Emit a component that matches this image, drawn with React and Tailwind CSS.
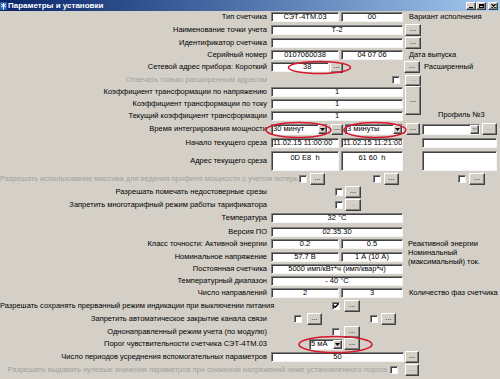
import React from 'react';

const sunken =
  'bg-white border border-t-[#808080] border-l-[#808080] border-b-[#f4f4f4] border-r-[#f4f4f4] shadow-[inset_1px_1px_0_#404040]';
const raised =
  'bg-[#d4d0c8] border border-t-white border-l-white border-b-[#404040] border-r-[#404040] shadow-[inset_-1px_-1px_0_#808080]';
const grey = 'text-[#a3a09a]';

function Row({ h, children }) {
  return <div className={`flex items-center shrink-0 ${h}`}>{children}</div>;
}

function Label({ children, w = 'w-[270px]', off }) {
  return (
    <div className={`${w} shrink-0 pr-[3px] text-right whitespace-nowrap ${off ? grey : 'text-black'}`}>
      {children}
    </div>
  );
}

function Field({ className = '', box = 'h-[10px] items-center justify-center', children }) {
  return (
    <div className={`${sunken} flex shrink-0 overflow-hidden whitespace-nowrap ${box} ${className}`}>
      {children}
    </div>
  );
}

function Btn({ className = '', off }) {
  return (
    <div className={`${raised} flex shrink-0 items-center justify-center ${off ? grey : 'text-black'} ${className}`}>
      <span className="leading-none -mt-[2px]">...</span>
    </div>
  );
}

function Check({ className = '', checked }) {
  return (
    <div className={`${sunken} w-[8px] h-[8px] shrink-0 flex items-center justify-center ${className}`}>
      {checked && (
        <svg width="6" height="6" viewBox="0 0 6 6">
          <path d="M0.5 2.5 L2.2 4.3 L5.5 0.8" stroke="#000" strokeWidth="1.3" fill="none" />
        </svg>
      )}
    </div>
  );
}

function Combo({ className = '', off, children }) {
  return (
    <div className={`${sunken} flex shrink-0 items-center h-[11px] ${className}`}>
      <span className="flex-1 pl-[1px] whitespace-nowrap overflow-hidden">{children}</span>
      <div className={`${raised} w-[9px] h-full flex items-center justify-center`}>
        <svg width="5" height="3" viewBox="0 0 5 3">
          <path d="M0 0h5L2.5 3z" fill={off ? '#a3a09a' : '#000'} />
        </svg>
      </div>
    </div>
  );
}

function TitleBar() {
  return (
    <div className="h-[11px] shrink-0 flex items-center bg-gradient-to-r from-[#0a246a] to-[#a6caf0]">
      <svg width="7" height="8" viewBox="0 0 7 8" className="ml-[0px] mr-[1px]">
        <rect width="7" height="8" fill="#2a5fb8" />
        <path d="M3.5 1 L3.5 7.5 M1 2 L6 5 M6 2 L1 5" stroke="#fff" strokeWidth="1" />
      </svg>
      <span className="text-white font-bold text-[8px] leading-none whitespace-nowrap">Параметры и установки</span>
      <div className="ml-auto mr-[2px] flex items-center">
        <div className={`${raised} w-[10px] h-[8px] flex items-end justify-center pb-[1px]`}>
          <div className="w-[4px] h-[1px] bg-black" />
        </div>
        <div className={`${raised} w-[10px] h-[8px] flex items-center justify-center`}>
          <div className="w-[5px] h-[4px] border border-black border-t-2" />
        </div>
        <div className={`${raised} w-[10px] h-[8px] ml-[2px] flex items-center justify-center`}>
          <svg width="5" height="4" viewBox="0 0 5 4">
            <path d="M0.5 0 L4.5 4 M4.5 0 L0.5 4" stroke="#000" strokeWidth="1.2" />
          </svg>
        </div>
      </div>
    </div>
  );
}

export default function App() {
  return (
    <div className="relative w-[500px] h-[379px] overflow-hidden bg-[#d4d0c8] font-['Liberation_Sans',Arial,sans-serif] text-[7.5px] leading-none text-black">
      <div className="flex flex-col">
        <TitleBar />

        <Row h="h-[12px]">
          <Label>Тип счетчика</Label>
          <Field className="ml-[1px] w-[68px]">СЭТ-4ТМ.03</Field>
          <Field className="ml-[2px] w-[62px]">00</Field>
          <span className="ml-[6px] whitespace-nowrap">Вариант исполнения</span>
        </Row>

        <Row h="h-[13px]">
          <Label>Наименование точки учета</Label>
          <Field className="ml-[1px] w-[132px]">Т-2</Field>
          <Btn className="ml-[2px] w-[16px] h-[12px]" />
        </Row>

        <Row h="h-[13px]">
          <Label>Идентификатор счетчика</Label>
          <Field className="ml-[1px] w-[132px]" />
          <Btn className="ml-[2px] w-[16px] h-[12px]" />
        </Row>

        <Row h="h-[11px]">
          <Label>Серийный номер</Label>
          <Field className="ml-[1px] w-[68px]">0107060038</Field>
          <Field className="ml-[2px] w-[62px]">04 07 06</Field>
          <span className="ml-[6px] whitespace-nowrap">Дата выпуска</span>
        </Row>

        <Row h="h-[14px]">
          <Label>Сетевой адрес прибора: Короткий</Label>
          <Field className="ml-[1px] w-[58px]" box="h-[10px] items-center justify-start pl-[31px]">38</Field>
          <Btn className="ml-[1px] w-[13px] h-[11px]" />
          <Btn className="ml-[61px] w-[16px] h-[12px]" />
          <span className="ml-[4px] whitespace-nowrap">Расширенный</span>
        </Row>

        <Row h="h-[12px]">
          <Label off>Отвечать только расширенным адресом</Label>
          <Check className="ml-[122px]" />
          <Btn off className="ml-[5px] w-[16px] h-[11px]" />
        </Row>

        <div className="flex shrink-0">
          <div className="flex flex-col">
            <Row h="h-[12px]">
              <Label>Коэффициент трансформации по напряжению</Label>
              <Field className="ml-[1px] w-[132px]">1</Field>
            </Row>
            <Row h="h-[12px]">
              <Label>Коэффициент трансформации по току</Label>
              <Field className="ml-[1px] w-[132px]">1</Field>
            </Row>
            <Row h="h-[11px]">
              <Label>Текущий коэффициент трансформации</Label>
              <Field className="ml-[1px] w-[132px]">1</Field>
            </Row>
          </div>
          <Btn className="ml-[2px] w-[16px] h-[29px]" />
          <span className="ml-[17px] self-end mb-[3px] whitespace-nowrap">Профиль №3</span>
        </div>

        <Row h="h-[16px]">
          <Label>Время интегрирования мощности</Label>
          <Combo className="ml-[1px] w-[57px]">30 минут</Combo>
          <Btn className="ml-[3px] w-[12px] h-[11px]" />
          <Combo className="ml-[2px] w-[58px]">3 минуты</Combo>
          <Btn className="ml-[3px] w-[14px] h-[12px]" />
          <Combo off className="ml-[2px] w-[58px]" />
          <Btn off className="ml-[2px] w-[15px] h-[12px]" />
        </Row>

        <Row h="h-[12px]">
          <Label>Начало текущего среза</Label>
          <Field className="ml-[1px] w-[68px]" box="h-[10px] items-center justify-start pl-[1px]">11.02.15 11:00:00</Field>
          <Field className="ml-[2px] w-[62px]" box="h-[10px] items-center justify-start pl-[1px]">11.02.15 11:21:00</Field>
          <Field className="ml-[19px] w-[75px]" />
        </Row>

        <Row h="h-[23px]">
          <Label>Адрес текущего среза</Label>
          <Field className="ml-[1px] w-[68px]" box="h-[20px] items-start justify-center pt-[2px]">0D E8&nbsp;&nbsp;h</Field>
          <Field className="ml-[2px] w-[62px]" box="h-[20px] items-start justify-center pt-[2px]">61 60&nbsp;&nbsp;h</Field>
          <Field className="ml-[19px] w-[75px]" box="h-[20px]" />
        </Row>

        <Row h="h-[14px]">
          <Label off w="w-[299px]">Разрешать использование массива для ведения профиля мощности с учетом потерь</Label>
          <Check />
          <Btn className="ml-[3px] w-[15px] h-[12px]" />
          <Check className="ml-[48px]" />
          <Btn className="ml-[3px] w-[15px] h-[12px]" />
          <Check className="ml-[59px]" />
          <Btn className="ml-[3px] w-[16px] h-[12px]" />
        </Row>

        <Row h="h-[12px]">
          <Label>Разрешать помечать недостоверные срезы</Label>
          <Check className="ml-[65px]" />
          <Btn className="ml-[2px] w-[16px] h-[12px]" />
        </Row>

        <Row h="h-[13px]">
          <Label>Запретить многотарифный режим работы тарификатора</Label>
          <Check className="ml-[65px]" />
          <Btn off className="ml-[2px] w-[16px] h-[12px]" />
        </Row>

        <Row h="h-[14px]">
          <Label>Температура</Label>
          <Field className="ml-[1px] w-[132px]">32 °С</Field>
        </Row>

        <Row h="h-[13px]">
          <Label>Версия ПО</Label>
          <Field className="ml-[1px] w-[132px]">02.35.30</Field>
        </Row>

        <Row h="h-[12px]">
          <Label>Класс точности: Активной энергии</Label>
          <Field className="ml-[1px] w-[68px]">0.2</Field>
          <Field className="ml-[2px] w-[62px]">0.5</Field>
          <span className="ml-[5px] whitespace-nowrap">Реактивной энергии</span>
        </Row>

        <Row h="h-[13px]">
          <Label>Номинальное напряжение</Label>
          <Field className="ml-[1px] w-[68px]">57.7 В</Field>
          <Field className="ml-[2px] w-[62px]">1 А (10 А)</Field>
          <div className="ml-[5px] flex flex-col whitespace-nowrap leading-[9px]">
            <span>Номинальный</span>
            <span>(максимальный) ток.</span>
          </div>
        </Row>

        <Row h="h-[12px]">
          <Label>Постоянная счетчика</Label>
          <Field className="ml-[1px] w-[132px]">5000 имп/кВт*ч (имп/квар*ч)</Field>
        </Row>

        <Row h="h-[12px]">
          <Label>Температурный диапазон</Label>
          <Field className="ml-[1px] w-[132px]">- 40 °С</Field>
        </Row>

        <Row h="h-[12px]">
          <Label>Число направлений</Label>
          <Field className="ml-[1px] w-[68px]">2</Field>
          <Field className="ml-[2px] w-[62px]">3</Field>
          <span className="ml-[6px] whitespace-nowrap">Количество фаз счетчика</span>
        </Row>

        <Row h="h-[13px]">
          <Label>Разрешать сохранять прерванный режим индикации при выключении питания</Label>
          <Check checked className="ml-[62px]" />
          <Btn className="ml-[4px] w-[16px] h-[12px]" />
        </Row>

        <Row h="h-[13px]">
          <Label>Запретить автоматическое закрытие канала связи</Label>
          <Check className="ml-[24px]" />
          <Btn className="ml-[5px] w-[15px] h-[12px]" />
          <Check className="ml-[48px]" />
          <Btn className="ml-[3px] w-[15px] h-[12px]" />
        </Row>

        <Row h="h-[13px]">
          <Label>Однонаправленный режим учета (по модулю)</Label>
          <Check className="ml-[62px]" />
          <Btn className="ml-[4px] w-[16px] h-[12px]" />
        </Row>

        <Row h="h-[12px]">
          <Label>Порог чувствительности счетчика СЭТ-4ТМ.03</Label>
          <Combo className="ml-[39px] w-[34px]">5 мА</Combo>
          <Btn className="ml-[1px] w-[16px] h-[12px]" />
        </Row>

        <Row h="h-[13px]">
          <Label>Число периодов усреднения вспомогательных параметров</Label>
          <Field className="ml-[1px] w-[133px]" box="h-[10px] items-end justify-center">50</Field>
          <Btn className="ml-[1px] w-[14px] h-[12px]" />
        </Row>

        <Row h="h-[14px]">
          <Label off w="w-[390px]">Разрешать выдавать нулевые значения параметров при снижении напряжений ниже установленного порога</Label>
          <Check />
          <Btn off className="ml-[7px] w-[14px] h-[12px]" />
        </Row>
      </div>

      <svg className="absolute left-0 top-0 pointer-events-none" width="500" height="379">
        <g fill="none" stroke="#d8182e" strokeWidth="1.6">
          <ellipse cx="319.5" cy="67.5" rx="31" ry="6" />
          <ellipse cx="298.5" cy="130" rx="32.5" ry="7.5" />
          <ellipse cx="375" cy="130" rx="31" ry="7.5" />
          <ellipse cx="335.5" cy="344.5" rx="36.5" ry="8" />
        </g>
      </svg>
    </div>
  );
}
